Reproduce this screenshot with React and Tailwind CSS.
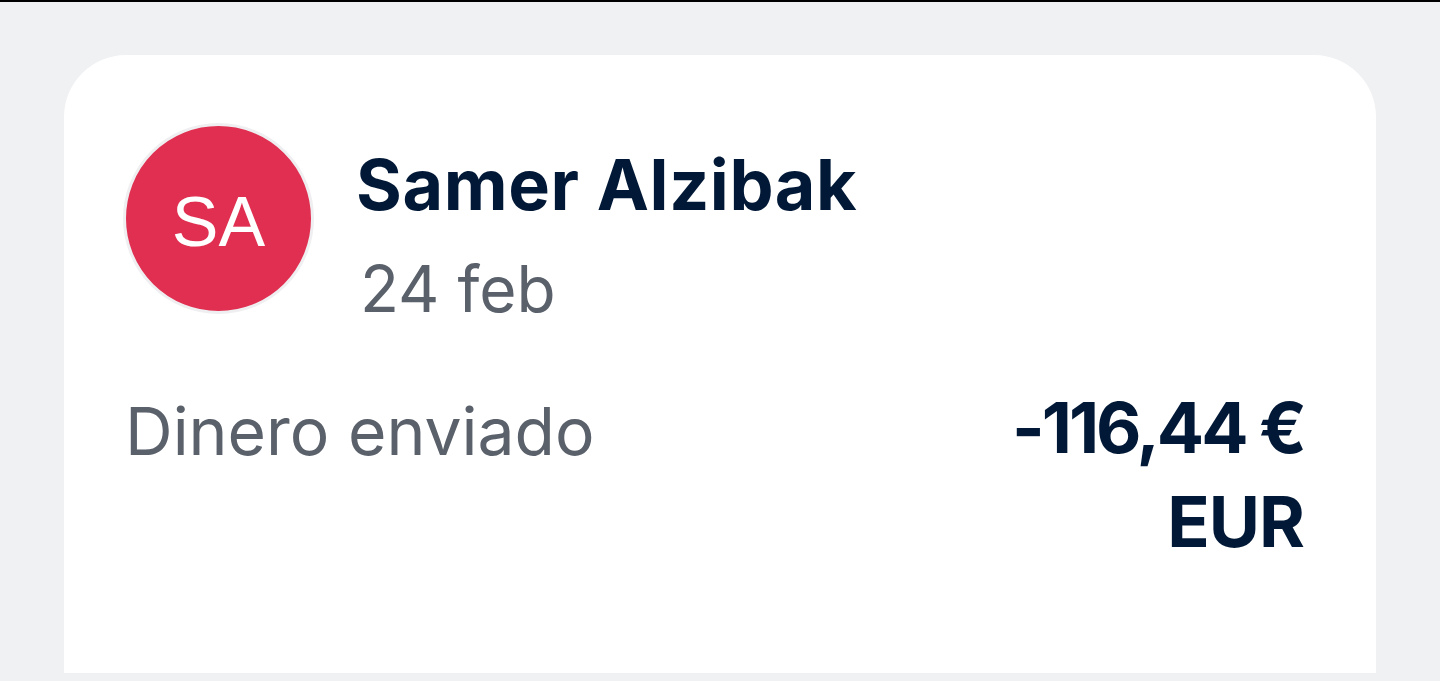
import React from 'react';

const Avatar = ({ initials }) => (
  <div className="w-[191px] h-[191px] shrink-0 rounded-full border-[3px] border-[#efeff1] bg-[#e02f50] flex items-center justify-center">
    <span className="mt-[7px] text-white text-[70px] leading-none font-['Liberation_Sans',sans-serif]">{initials}</span>
  </div>
);

const App = () => {
  return (
    <div className="w-[1440px] h-[681px] overflow-hidden bg-[#f0f1f3] border-t-2 border-black">
      <div className="mx-[64px] mt-[53px] h-[618px] bg-white rounded-t-[62px] pl-[59px] pr-[72px] pt-[68px]">
        <div className="flex items-start gap-[42px]">
          <Avatar initials="SA" />
          <div className="pt-[22px]">
            <h2 className="text-[#011836] text-[70px] leading-[80px] font-bold font-['Inter',sans-serif] tracking-[0.6px]">
              Samer Alzibak
            </h2>
            <p className="mt-[24px] text-[#5a616b] text-[64px] leading-[80px] font-['Inter',sans-serif] pl-[4px]">
              24 feb
            </p>
          </div>
        </div>

        <div className="flex justify-between items-start mt-[56px]">
          <span className="text-[#5a616b] text-[66px] leading-[93px] font-['Inter',sans-serif] pl-[2px]">
            Dinero enviado
          </span>
          <div className="-mt-[4px] text-right text-[#011836] text-[70px] leading-[94px] font-bold font-['Inter',sans-serif]">
            <div className="tracking-[-3px]">-116,44 €</div>
            <div className="tracking-[-1px]">EUR</div>
          </div>
        </div>
      </div>
    </div>
  );
};

export default App;
